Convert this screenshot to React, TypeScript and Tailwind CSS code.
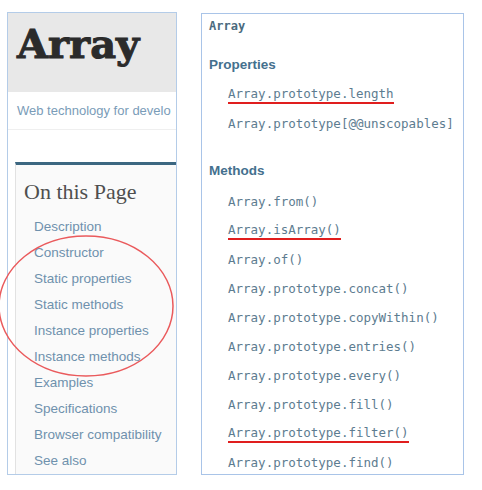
import React from "react";

const tocLinks = [
    "Description",
    "Constructor",
    "Static properties",
    "Static methods",
    "Instance properties",
    "Instance methods",
    "Examples",
    "Specifications",
    "Browser compatibility",
    "See also",
];

const properties = [
    { name: "Array.prototype.length", marked: true },
    { name: "Array.prototype[@@unscopables]", marked: false },
];

const methods = [
    { name: "Array.from()", marked: false },
    { name: "Array.isArray()", marked: true },
    { name: "Array.of()", marked: false },
    { name: "Array.prototype.concat()", marked: false },
    { name: "Array.prototype.copyWithin()", marked: false },
    { name: "Array.prototype.entries()", marked: false },
    { name: "Array.prototype.every()", marked: false },
    { name: "Array.prototype.fill()", marked: false },
    { name: "Array.prototype.filter()", marked: true },
    { name: "Array.prototype.find()", marked: false },
];

function CodeItem({ name, marked }: { name: string; marked: boolean }) {
    return (
        <li className="h-[29px] flex items-center pl-[19px]">
            <span
                className={
                    marked
                        ? "inline-block leading-[16px] border-b-2 border-[#e01e1e] pt-[1px]"
                        : "inline-block leading-[16px]"
                }
            >
                {name}
            </span>
        </li>
    );
}

export default function App() {
    return (
        <div className="relative w-[482px] h-[490px] bg-white overflow-hidden flex gap-[24px] pl-[7px] pt-[12px]">
            {/* left: mdn page snippet */}
            <div className="w-[170px] h-[463px] border border-[#b4cce8] flex flex-col overflow-hidden">
                <div className="h-[80px] bg-[#e8e8e8] pl-[9px] pt-[11px]">
                    <h1
                        className="text-[40px] leading-none font-bold text-[#2b2b2b]"
                        style={{ fontFamily: '"DejaVu Serif", serif', WebkitTextStroke: "1px #2b2b2b" }}
                    >
                        Array
                    </h1>
                </div>
                <div className="h-[38px] flex items-center pl-[9px] border-b border-[#efefef] whitespace-nowrap overflow-hidden">
                    <span
                        className="text-[13px] text-[#7a9cb8]"
                        style={{ fontFamily: '"Liberation Sans", Arial, sans-serif' }}
                    >
                        Web technology for develo
                    </span>
                </div>
                <div className="flex-1 mt-[32px] ml-[7px] border-t-[3px] border-[#3c6781] border-l border-l-[#e2e2e2] bg-[#fafafa]">
                    <h2
                        className="mt-[15px] pl-[8px] h-[24px] leading-[24px] text-[22px] text-[#4f4f4f]"
                        style={{ fontFamily: '"Liberation Serif", serif' }}
                    >
                        On this Page
                    </h2>
                    <ul
                        className="mt-[10px] pl-[18px] text-[13.5px] text-[#6f91ad]"
                        style={{ fontFamily: '"Liberation Sans", Arial, sans-serif' }}
                    >
                        {tocLinks.map((l) => (
                            <li key={l} className="h-[26px] leading-[26px] whitespace-nowrap">
                                {l}
                            </li>
                        ))}
                    </ul>
                </div>
            </div>

            {/* right: sidebar listing */}
            <div className="w-[263px] h-[462px] mt-[1px] border border-[#a9c4e8] overflow-hidden pl-[7px]">
                <div
                    className="h-[24px] leading-[24px] text-[12px] font-bold text-[#4a6a7e]"
                    style={{ fontFamily: '"DejaVu Sans Mono", monospace' }}
                >
                    Array
                </div>
                <h3
                    className="mt-[15px] h-[24px] leading-[24px] text-[13.5px] font-bold text-[#44708e]"
                    style={{ fontFamily: '"Liberation Sans", Arial, sans-serif' }}
                >
                    Properties
                </h3>
                <ul
                    className="mt-[3px] text-[12.5px] text-[#5d7c90]"
                    style={{ fontFamily: '"DejaVu Sans Mono", monospace' }}
                >
                    {properties.map((p) => (
                        <CodeItem key={p.name} name={p.name} marked={p.marked} />
                    ))}
                </ul>
                <h3
                    className="mt-[21px] h-[24px] leading-[24px] text-[13.5px] font-bold text-[#44708e]"
                    style={{ fontFamily: '"Liberation Sans", Arial, sans-serif' }}
                >
                    Methods
                </h3>
                <ul
                    className="mt-[4px] text-[12.5px] text-[#5d7c90]"
                    style={{ fontFamily: '"DejaVu Sans Mono", monospace' }}
                >
                    {methods.map((m) => (
                        <CodeItem key={m.name} name={m.name} marked={m.marked} />
                    ))}
                </ul>
            </div>

            {/* hand-drawn circle around static/instance entries */}
            <svg
                className="absolute left-[-3px] top-[234px] pointer-events-none"
                width="180"
                height="146"
                viewBox="0 0 180 146"
            >
                <ellipse cx="89" cy="72" rx="87" ry="70" fill="none" stroke="#ea5a5c" strokeWidth="1.5" />
            </svg>
        </div>
    );
}
